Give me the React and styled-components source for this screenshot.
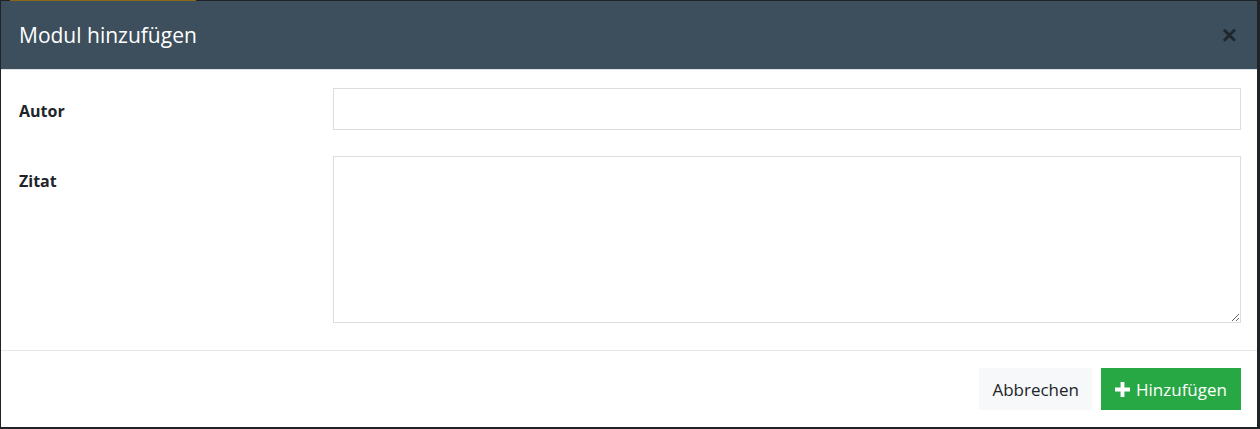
import React from "react";
import styled, { createGlobalStyle } from "styled-components";

const GlobalStyle = createGlobalStyle`
  html, body {
    margin: 0;
    padding: 0;
    background: #1f2327;
  }
  body {
    font-family: "Open Sans", "Noto Sans", sans-serif;
  }
`;

const Backdrop = styled.div`
  position: relative;
  padding: 1px 3px 2px 1px;
  background: #1f2327;

  &::before {
    content: "";
    position: absolute;
    top: 0;
    left: 10px;
    width: 186px;
    height: 1px;
    background: #8a6a12;
  }
`;

const Modal = styled.div`
  background: #fff;
  display: flex;
  flex-direction: column;
  height: 426px;
`;

const Header = styled.div`
  height: 68px;
  display: flex;
  align-items: center;
  justify-content: space-between;
  padding: 0 20px 0 18px;
  background: #3d4f5d;
  border-bottom: 1px solid #dee2e6;
`;

const Title = styled.h5`
  margin: 0;
  font-size: 21px;
  font-weight: 400;
  color: #fff;
`;

const Close = styled.button`
  border: 0;
  background: transparent;
  padding: 0;
  font-size: 26px;
  font-weight: 700;
  line-height: 1;
  color: #000;
  opacity: 0.5;
  font-family: "Liberation Sans", Arial, sans-serif;
`;

const Body = styled.div`
  flex: 1;
  display: grid;
  grid-template-columns: 314px 1fr;
  row-gap: 26px;
  align-content: start;
  padding: 18px 16px 0 18px;
  border-bottom: 1px solid #e6e9ec;
`;

const Label = styled.label`
  font-size: 16px;
  font-weight: 700;
  color: #212529;
  padding-top: ${({ top }) => top}px;
`;

const Input = styled.input`
  height: 42px;
  box-sizing: border-box;
  border: 1px solid #d9dee2;
  padding: 6px 12px;
  font: inherit;
`;

const TextArea = styled.textarea`
  height: 167px;
  box-sizing: border-box;
  border: 1px solid #d9dee2;
  padding: 6px 12px;
  font: inherit;
  resize: vertical;
  margin-bottom: 27px;
`;

const Footer = styled.div`
  display: flex;
  justify-content: flex-end;
  gap: 9px;
  padding: 17px 16px 17px 16px;
`;

const Button = styled.button`
  height: 42px;
  border: 0;
  display: flex;
  align-items: center;
  gap: 6px;
  padding: 0 ${({ primary }) => (primary ? 14 : 13)}px;
  font-family: inherit;
  font-size: 17px;
  background: ${({ primary }) => (primary ? "#28a745" : "#f7f8fa")};
  color: ${({ primary }) => (primary ? "#fff" : "#212529")};
`;

const PlusIcon = () => (
  <svg width="15" height="15" viewBox="0 0 14 14">
    <path d="M5.2 0h3.6v5.2H14v3.6H8.8V14H5.2V8.8H0V5.2h5.2z" fill="#fff" />
  </svg>
);

export default function App() {
  return (
    <>
      <GlobalStyle />
      <Backdrop>
        <Modal>
          <Header>
            <Title>Modul hinzufügen</Title>
            <Close>×</Close>
          </Header>
          <Body>
            <Label top={12}>Autor</Label>
            <Input type="text" />
            <Label top={14}>Zitat</Label>
            <TextArea />
          </Body>
          <Footer>
            <Button>Abbrechen</Button>
            <Button primary>
              <PlusIcon />
              Hinzufügen
            </Button>
          </Footer>
        </Modal>
      </Backdrop>
    </>
  );
}
